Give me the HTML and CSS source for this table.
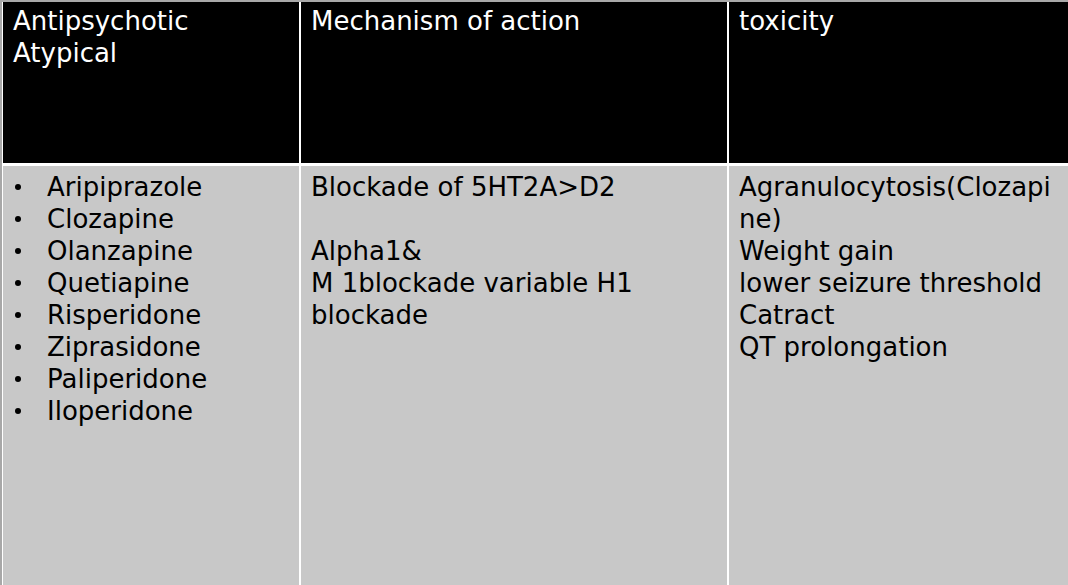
FILE: index.html
```html
<!DOCTYPE html>
<html>
<head>
<meta charset="utf-8">
<link rel="stylesheet" href="styles.css">
</head>
<body>
<div class="table">
  <div class="cell head">
    <div>Antipsychotic</div>
    <div>Atypical</div>
  </div>
  <div class="cell head">
    <div>Mechanism of action</div>
  </div>
  <div class="cell head">
    <div>toxicity</div>
  </div>
  <div class="cell body">
    <ul class="drugs">
      <li>Aripiprazole</li>
      <li>Clozapine</li>
      <li>Olanzapine</li>
      <li>Quetiapine</li>
      <li>Risperidone</li>
      <li>Ziprasidone</li>
      <li>Paliperidone</li>
      <li>Iloperidone</li>
    </ul>
  </div>
  <div class="cell body">
    <div>Blockade of 5HT2A&gt;D2</div>
    <div class="blank">&nbsp;</div>
    <div>Alpha1&amp;</div>
    <div>M 1blockade variable H1</div>
    <div>blockade</div>
  </div>
  <div class="cell body">
    <div>Agranulocytosis(Clozapi</div>
    <div>ne)</div>
    <div>Weight gain</div>
    <div>lower seizure threshold</div>
    <div>Catract</div>
    <div>QT prolongation</div>
  </div>
</div>
</body>
</html>
```

FILE: styles.css
```css
html, body {
  margin: 0;
  padding: 0;
  height: 100%;
  overflow: hidden;
}
body {
  background: #a8a8a8;
  padding: 2px 0 0 2px;
  box-sizing: border-box;
  font-family: "DejaVu Sans", Verdana, sans-serif;
  font-size: 26px;
  line-height: 32px;
}
.table {
  display: grid;
  grid-template-columns: 296px 426px 1fr;
  grid-template-rows: 161px 1fr;
  column-gap: 2px;
  row-gap: 3px;
  background: #ffffff;
  padding-left: 1px;
  height: 100%;
  box-sizing: border-box;
}
.cell {
  padding: 3px 8px 0 10px;
  white-space: nowrap;
  overflow: hidden;
}
.head {
  background: #000000;
  color: #ffffff;
}
.body {
  background: #c8c8c8;
  color: #000000;
  padding-top: 5px;
}
.drugs {
  list-style: none;
  margin: 0;
  padding: 0;
}
.drugs li {
  display: flex;
  align-items: center;
}
.drugs li::before {
  content: "";
  width: 6px;
  height: 6px;
  border-radius: 50%;
  background: #000;
  margin: 0 26px 0 2px;
  flex: none;
}
```
